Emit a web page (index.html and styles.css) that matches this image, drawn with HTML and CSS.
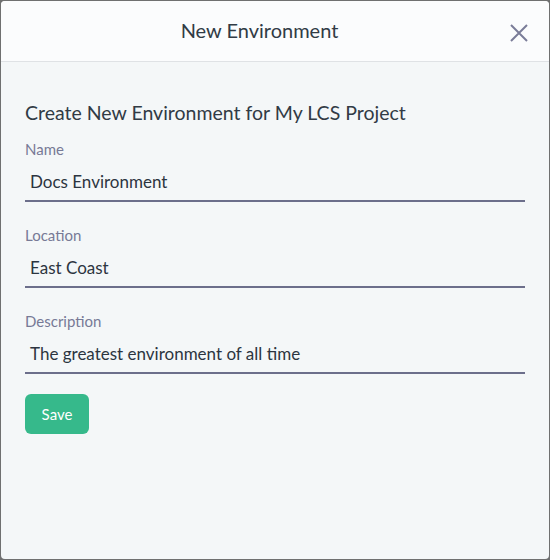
FILE: index.html
```html
<!DOCTYPE html>
<html>
<head>
<meta charset="utf-8">
<link rel="stylesheet" href="styles.css">
</head>
<body>
<div class="modal">
  <header class="modal-header">
    <h1 class="modal-title">New Environment</h1>
    <button class="close" aria-label="Close">
      <svg width="20" height="20" viewBox="0 0 20 20"><path d="M2 2 L18 18 M18 2 L2 18" stroke="#7a7c98" stroke-width="2" fill="none"/></svg>
    </button>
  </header>
  <div class="modal-body">
    <h2 class="form-title">Create New Environment for My LCS Project</h2>
    <div class="field">
      <label class="label">Name</label>
      <div class="input">Docs Environment</div>
    </div>
    <div class="field">
      <label class="label">Location</label>
      <div class="input">East Coast</div>
    </div>
    <div class="field">
      <label class="label">Description</label>
      <div class="input">The greatest environment of all time</div>
    </div>
    <button class="save">Save</button>
  </div>
</div>
</body>
</html>
```
FILE: styles.css
```css
html, body {
  margin: 0;
  padding: 0;
  height: 100%;
}
body {
  background: #6f7070;
  padding: 1px;
  box-sizing: border-box;
  font-family: "Lato", "Open Sans", sans-serif;
}
.modal {
  height: 558px;
  border-radius: 4px;
  overflow: hidden;
  background: #f4f7f8;
  display: flex;
  flex-direction: column;
}
.modal-header {
  height: 60px;
  background: #fbfcfd;
  border-bottom: 1px solid #dfe2e5;
  display: flex;
  align-items: center;
  justify-content: center;
  padding-right: 31px;
  position: relative;
}
.modal-title {
  margin: 0;
  font-size: 20px;
  font-weight: 400;
  color: #313b45;
  position: relative;
  top: -1px;
}
.close {
  position: absolute;
  right: 20px;
  top: 22px;
  background: none;
  border: 0;
  padding: 0;
  width: 20px;
  height: 20px;
  display: block;
}
.close svg { display: block; }
.modal-body {
  padding: 38px 24px 0 24px;
}
.form-title {
  margin: 0 0 13px 0;
  font-size: 19.5px;
  font-weight: 400;
  color: #313b45;
  line-height: 26px;
}
.field {
  margin-bottom: 23px;
}
.label {
  display: block;
  font-size: 15px;
  color: #777a96;
  line-height: 20px;
}
.input {
  margin-top: 12px;
  padding: 0 5px 7px;
  font-size: 17px;
  line-height: 22px;
  color: #2c3540;
  border-bottom: 2px solid #6c6f8b;
}
.save {
  margin-top: -3px;
  width: 64px;
  height: 40px;
  border: 0;
  border-radius: 6px;
  background: #36b98b;
  color: #ffffff;
  font-family: inherit;
  font-size: 15px;
  padding: 0;
}
```
